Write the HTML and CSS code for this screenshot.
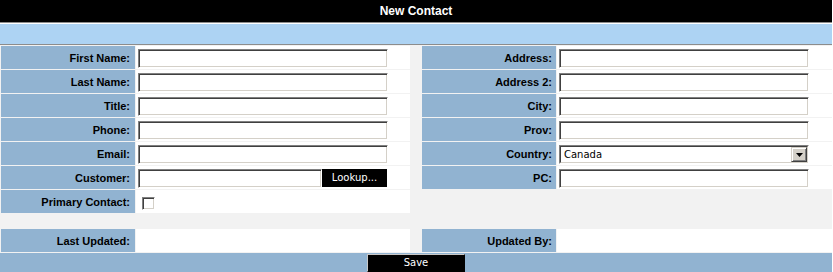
FILE: index.html
```html
<!DOCTYPE html>
<html lang="en">
<head>
  <meta charset="UTF-8">
  <title>New Contact</title>
  <link rel="stylesheet" href="styles.css">
</head>
<body>
  <form id="contactForm" class="contact-form">
    <div class="form-title">New Contact</div>
    <div class="form-bar"></div>

    <div class="form-grid">
      <!-- row 1 -->
      <label class="label" for="firstName">First Name:</label>
      <div class="value"><input type="text" id="firstName" name="firstName" class="field"></div>
      <label class="label right" for="address">Address:</label>
      <div class="value right"><input type="text" id="address" name="address" class="field"></div>

      <!-- row 2 -->
      <label class="label" for="lastName">Last Name:</label>
      <div class="value"><input type="text" id="lastName" name="lastName" class="field"></div>
      <label class="label right" for="address2">Address 2:</label>
      <div class="value right"><input type="text" id="address2" name="address2" class="field"></div>

      <!-- row 3 -->
      <label class="label" for="title">Title:</label>
      <div class="value"><input type="text" id="title" name="title" class="field"></div>
      <label class="label right" for="city">City:</label>
      <div class="value right"><input type="text" id="city" name="city" class="field"></div>

      <!-- row 4 -->
      <label class="label" for="phone">Phone:</label>
      <div class="value"><input type="text" id="phone" name="phone" class="field"></div>
      <label class="label right" for="prov">Prov:</label>
      <div class="value right"><input type="text" id="prov" name="prov" class="field"></div>

      <!-- row 5 -->
      <label class="label" for="email">Email:</label>
      <div class="value"><input type="text" id="email" name="email" class="field"></div>
      <label class="label right" for="country">Country:</label>
      <div class="value right">
        <div class="select">
          <div class="select-inner">
            <select id="country" name="country">
              <option>Canada</option>
              <option>United States</option>
            </select>
            <span class="select-arrow">
              <svg width="7" height="4" viewBox="0 0 7 4"><path d="M0 0h7L3.5 4z" fill="#000"/></svg>
            </span>
          </div>
        </div>
      </div>

      <!-- row 6 -->
      <label class="label" for="customer">Customer:</label>
      <div class="value">
        <input type="text" id="customer" name="customer" class="field short">
        <button type="button" class="btn lookup">Lookup...</button>
      </div>
      <label class="label right" for="pc">PC:</label>
      <div class="value right"><input type="text" id="pc" name="pc" class="field"></div>

      <!-- row 7 -->
      <label class="label" for="primary">Primary Contact:</label>
      <div class="value"><input type="checkbox" id="primary" name="primary" class="check"></div>

      <div class="spacer"></div>

      <!-- audit row -->
      <div class="label">Last Updated:</div>
      <div class="value"></div>
      <div class="label right">Updated By:</div>
      <div class="value right"></div>
    </div>

    <div class="form-footer">
      <button type="button" class="btn save">Save</button>
    </div>
  </form>
</body>
</html>
```

FILE: styles.css
```css
body {
  margin: 0;
  background: #fff;
  font-family: "Liberation Sans", Arial, sans-serif;
  overflow: hidden;
}
.contact-form {
  width: 832px;
}
.form-title {
  height: 22px;
  line-height: 22px;
  background: #000;
  color: #fff;
  font-weight: bold;
  font-size: 12px;
  text-align: center;
}
.form-bar {
  height: 21px;
  background: #add3f3;
  border-top: 1px solid #8c8c8c;
  border-bottom: 1px solid #8c8c8c;
  box-shadow: inset 0 1px 0 #fff;
}
.form-grid {
  display: grid;
  grid-template-columns: 134px 274px 10px 134px 275px;
  grid-template-rows: repeat(7, 23px) 14px 23px;
  gap: 1px;
  padding: 1px 0 1px 1px;
  background: #f2f2f2;
}
.label {
  grid-column: 1;
  display: flex;
  align-items: center;
  justify-content: flex-end;
  padding-right: 5px;
  background: #91b3d1;
  color: #000;
  font-size: 11px;
  font-weight: bold;
}
.label.right {
  grid-column: 4;
  padding-right: 4px;
}
.value {
  grid-column: 2;
  display: flex;
  align-items: flex-start;
  padding: 3px 0 0 2px;
  background: #fff;
}
.value.right {
  grid-column: 5;
}
.spacer {
  grid-column: 1 / -1;
}
.field {
  width: 250px;
  height: 19px;
  box-sizing: border-box;
  margin: 0;
  padding: 0 3px;
  font-size: 11px;
  border: 1px solid;
  border-color: #808080 #fff #fff #808080;
  box-shadow: inset 1px 1px 0 #404040, inset -1px -1px 0 #d4d0c8;
  background: #fff;
  outline: none;
}
.field.short {
  width: 184px;
}
.check {
  appearance: none;
  width: 13px;
  height: 13px;
  margin: 4px 0 0 4px;
  box-sizing: border-box;
  border: 1px solid;
  border-color: #808080 #fff #fff #808080;
  box-shadow: inset 1px 1px 0 #404040, inset -1px -1px 0 #d4d0c8;
  background: #fff;
}
.select {
  width: 250px;
  height: 19px;
  box-sizing: border-box;
  border: 1px solid;
  border-color: #808080 #fff #fff #808080;
}
.select-inner {
  display: flex;
  height: 100%;
  box-sizing: border-box;
  border: 1px solid;
  border-color: #404040 #d4d0c8 #d4d0c8 #404040;
  background: #fff;
}
.select-inner select {
  appearance: none;
  flex: 1;
  min-width: 0;
  height: 15px;
  margin: 0;
  padding: 0 0 0 3px;
  border: none;
  background: #fff;
  color: #000;
  font-family: "DejaVu Sans", Verdana, sans-serif;
  font-size: 10px;
  outline: none;
}
.select-arrow {
  width: 16px;
  height: 15px;
  box-sizing: border-box;
  display: flex;
  align-items: center;
  justify-content: center;
  background: #d4d0c8;
  border: 1px solid;
  border-color: #d4d0c8 #404040 #404040 #d4d0c8;
  box-shadow: inset 1px 1px 0 #fff, inset -1px -1px 0 #808080;
}
.btn {
  margin: 0;
  padding: 0;
  background: #000;
  color: #fff;
  font-family: "DejaVu Sans", Verdana, sans-serif;
  font-size: 10px;
  line-height: 16px;
  cursor: pointer;
}
.lookup {
  width: 65px;
  height: 18px;
  border: none;
}
.form-footer {
  display: flex;
  justify-content: center;
  height: 19px;
  padding-top: 1px;
  box-sizing: border-box;
  background: #91b3d1;
}
.save {
  width: 98px;
  height: 18px;
  border: 1px solid;
  border-color: #c8c8c8 #000 #000 #c8c8c8;
}
```
